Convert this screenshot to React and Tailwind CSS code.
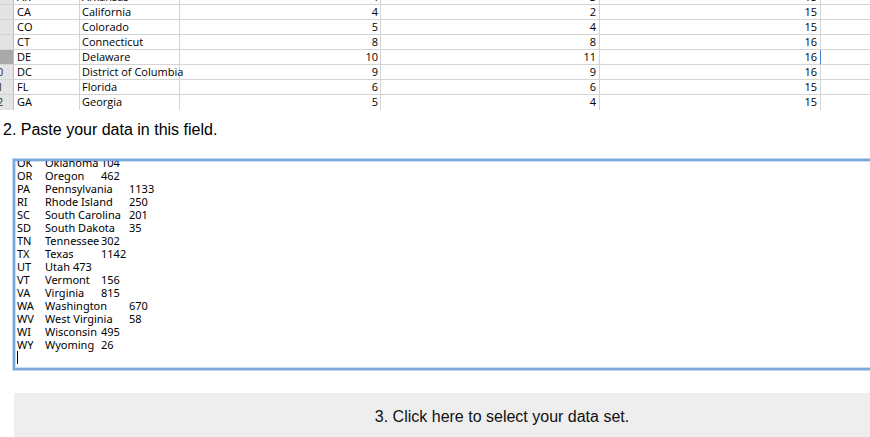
import React from 'react';

// rows of the spreadsheet picture (first one is cut off at the top)
const sheetRows = [
  { num: 5, abbr: 'AR', name: 'Arkansas', c: 4, d: 3, e: 15 },
  { num: 6, abbr: 'CA', name: 'California', c: 4, d: 2, e: 15 },
  { num: 7, abbr: 'CO', name: 'Colorado', c: 5, d: 4, e: 15 },
  { num: 8, abbr: 'CT', name: 'Connecticut', c: 8, d: 8, e: 16 },
  { num: 9, abbr: 'DE', name: 'Delaware', c: 10, d: 11, e: 16, active: true },
  { num: 10, abbr: 'DC', name: 'District of Columbia', c: 9, d: 9, e: 16 },
  { num: 11, abbr: 'FL', name: 'Florida', c: 6, d: 6, e: 15 },
  { num: 12, abbr: 'GA', name: 'Georgia', c: 5, d: 4, e: 15 },
];

const pasted = [
  ['OK', 'Oklahoma', '104'],
  ['OR', 'Oregon', '462'],
  ['PA', 'Pennsylvania', '1133'],
  ['RI', 'Rhode Island', '250'],
  ['SC', 'South Carolina', '201'],
  ['SD', 'South Dakota', '35'],
  ['TN', 'Tennessee', '302'],
  ['TX', 'Texas', '1142'],
  ['UT', 'Utah', '473'],
  ['VT', 'Vermont', '156'],
  ['VA', 'Virginia', '815'],
  ['WA', 'Washington', '670'],
  ['WV', 'West Virginia', '58'],
  ['WI', 'Wisconsin', '495'],
  ['WY', 'Wyoming', '26'],
];

const SheetRow = ({ row, last }) => (
  <div
    className={`flex h-[15px] shrink-0 leading-[14px] ${last ? '' : 'border-b border-[#d4d4d4]'}`}
  >
    <div
      className={`w-[14px] shrink-0 overflow-hidden border-r border-[#bdbdbd] ${
        row.active ? 'bg-[#a9a9a9]' : 'bg-[#e4e4e4]'
      }`}
    >
      <div className="ml-[-18px] w-[30px] text-center text-[#333]">{row.num}</div>
    </div>
    <div className="w-[66px] shrink-0 border-r border-[#d4d4d4] pl-[3px]">{row.abbr}</div>
    <div className="w-[100px] shrink-0 border-r border-[#d4d4d4] pl-[2px] whitespace-nowrap">
      {row.name}
    </div>
    <div className="w-[201px] shrink-0 border-r border-[#d4d4d4] pr-[2px] text-right">{row.c}</div>
    <div className="w-[219px] shrink-0 border-r border-[#d4d4d4] pr-[3px] text-right">{row.d}</div>
    <div
      className={`w-[221px] shrink-0 pr-[3px] text-right border-r ${
        row.active ? 'border-[#4a7fd0]' : 'border-[#d4d4d4]'
      }`}
    >
      {row.e}
    </div>
  </div>
);

export default function App() {
  return (
    <div className="h-[437px] w-full overflow-hidden bg-white">
      <div className="w-[992px] font-['Liberation_Sans',Arial,sans-serif] text-black">
        {/* spreadsheet screenshot */}
        <div className="flex h-[110px] flex-col justify-end overflow-hidden font-['Open_Sans','Noto_Sans',sans-serif] text-[11px]">
          {sheetRows.map((row, i) => (
            <SheetRow key={row.abbr} row={row} last={i === sheetRows.length - 1} />
          ))}
        </div>

        <h2 className="mt-[11px] pl-[3px] text-[16px] leading-[18px]">2. Paste your data in this field.</h2>

        {/* pasted data field, scrolled to the bottom */}
        <div className="ml-[13px] mt-[20px] h-[211px] border-2 border-[#7ea8d9] shadow-[0_0_0_1px_#bcd5f0,inset_0_0_0_1px_#c9ddf3]">
          <div className="flex h-full flex-col justify-end overflow-hidden pb-[4px] pl-[2px] font-['Noto_Sans','DejaVu_Sans',sans-serif] text-[11px] leading-[13px] [tab-size:28px]">
            {pasted.map(([a, n, v]) => (
              <div key={a} className="shrink-0 whitespace-pre">
                {`${a}\t${n}\t${v}`}
              </div>
            ))}
            <div className="h-[13px] shrink-0">
              <div className="h-[13px] w-px bg-black" />
            </div>
          </div>
        </div>

        <button className="ml-[14px] mt-[23px] flex h-[50px] w-[976px] items-start justify-center bg-[#eeeeee] pt-[15px] text-[16px] leading-[18px] text-[#111]">
          3. Click here to select your data set.
        </button>
      </div>
    </div>
  );
}
